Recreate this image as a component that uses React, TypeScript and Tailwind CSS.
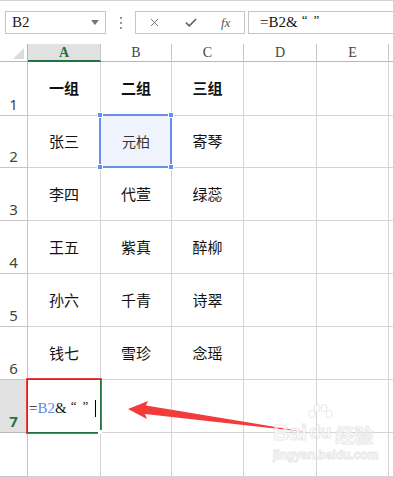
import { X, Check } from 'lucide-react';

const cols = ['A', 'B', 'C', 'D', 'E'];

const data: string[][] = [
  ['一组', '二组', '三组'],
  ['张三', '元柏', '寄琴'],
  ['李四', '代萱', '绿蕊'],
  ['王五', '紫真', '醉柳'],
  ['孙六', '千青', '诗翠'],
  ['钱七', '雪珍', '念瑶'],
];

const cjk = { fontFamily: '"Noto Sans CJK SC", sans-serif' };
const serif = { fontFamily: '"Liberation Serif", "Noto Sans CJK SC", serif' };

function Quotes() {
  return (
    <span className="relative top-[-3px] text-[13px] ml-[4px] tracking-[6px]" style={serif}>“”</span>
  );
}

function Toolbar() {
  return (
    <div className="h-[44px] border-t border-[#d4d4d4] flex items-start pt-[10px] pl-[5px]">
      <div className="w-[101px] h-[23px] border border-[#c6c6c6] flex items-center justify-between pl-[6px] pr-[6px]">
        <span className="text-[15px] text-[#222] leading-none" style={serif}>B2</span>
        <svg width="8" height="5" viewBox="0 0 8 5"><path d="M0 0h8L4 5z" fill="#777" /></svg>
      </div>
      <div className="ml-[14px] mt-[6px] flex flex-col gap-[3px]">
        <span className="w-[2px] h-[2px] bg-[#999]" />
        <span className="w-[2px] h-[2px] bg-[#999]" />
        <span className="w-[2px] h-[2px] bg-[#999]" />
      </div>
      <div className="ml-[13px] w-[110px] h-[23px] border border-[#c6c6c6] flex items-center">
        <X className="w-[13px] h-[13px] ml-[12px] text-[#666]" strokeWidth={1.6} />
        <Check className="w-[14px] h-[14px] ml-[23px] text-[#666]" strokeWidth={3} />
        <span className="ml-[23px] text-[13px] italic text-[#555] leading-none" style={serif}>fx</span>
      </div>
      <div className="ml-[3px] flex-1 h-[23px] border border-r-0 border-[#c6c6c6] flex items-center pl-[11px]">
        <span className="text-[15px] text-[#111] leading-none" style={serif}>=B2&amp;<Quotes /></span>
      </div>
    </div>
  );
}

function Grid() {
  const rowHeights = ['h-[54px]', 'h-[52px]', 'h-[53px]', 'h-[53px]', 'h-[53px]', 'h-[53px]', 'h-[53px]', 'h-[44px]'];
  return (
    <div className="grid grid-cols-[28px_73px_71px_72px_73px_72px_4px]">
      <div className="h-[18px] border-r border-b border-[#b8b8b8] flex items-end justify-end pr-[3px] pb-[2px]">
        <svg width="11" height="11" viewBox="0 0 11 11"><path d="M11 0v11H0z" fill="#dcdcdc" /></svg>
      </div>
      {cols.map((c, i) => (
        <div
          key={c}
          className={
            i === 0
              ? 'h-[18px] bg-[#e1e1e1] border-r border-[#c6c6c6] border-b-2 border-b-[#217346] flex items-center justify-center text-[14px] font-bold text-[#217346]'
              : 'h-[18px] border-r border-b border-[#c6c6c6] border-b-[#b8b8b8] flex items-center justify-center text-[14px] text-[#444]'
          }
          style={serif}
        >
          {c}
        </div>
      ))}
      <div className="h-[18px] border-b border-[#b8b8b8]" />

      {rowHeights.map((h, r) => (
        <Row key={r} r={r} h={h} />
      ))}
    </div>
  );
}

function Row({ r, h }: { r: number; h: string }) {
  const active = r === 6;
  const rowData = data[r];
  return (
    <>
      <div
        className={`${h} border-r border-b ${active ? 'bg-[#e1e1e1] border-r-[#217346] border-b-[#b8b8b8]' : 'border-[#c6c6c6]'} flex items-end justify-center pb-[1px]`}
      >
        {r < 7 && (
          <span
            className={`text-[15px] leading-[20px] ${active ? 'font-bold text-[#217346]' : 'text-[#444]'}`}
            style={{ fontFamily: '"Noto Sans", sans-serif' }}
          >
            {r + 1}
          </span>
        )}
      </div>
      {cols.map((c, ci) => {
        const text = rowData ? rowData[ci] : undefined;
        const selected = r === 1 && ci === 1;
        const editing = r === 6 && ci === 0;
        return (
          <div key={c} className={`${h} relative border-r border-b border-[#d4d4d4] flex items-center justify-center`}>
            {selected && (
              <div className="absolute z-10 -left-[2px] -top-[2px] -right-[1px] -bottom-[1px] border-2 border-[#6490eb] bg-[#eef3fd] flex items-center justify-center">
                <span className="text-[14px] text-[#333] pl-[1px]" style={cjk}>{text}</span>
                <span className="absolute -left-[4px] -top-[4px] w-[6px] h-[6px] bg-[#6490eb] border border-white" />
                <span className="absolute -right-[4px] -top-[4px] w-[6px] h-[6px] bg-[#6490eb] border border-white" />
                <span className="absolute -left-[4px] -bottom-[4px] w-[6px] h-[6px] bg-[#6490eb] border border-white" />
                <span className="absolute -right-[4px] -bottom-[4px] w-[6px] h-[6px] bg-[#6490eb] border border-white" />
              </div>
            )}
            {!selected && text && (
              <span className={`text-[15px] text-[#111] ${r === 0 ? 'font-bold' : ''}`} style={cjk}>{text}</span>
            )}
            {editing && (
              <div className="absolute z-10 -left-[2px] -top-[2px] right-[-2px] bottom-[-2px] border border-[#f23b3b]">
                <div className="w-full h-full border border-[#217346] flex items-center pl-px pt-[5px]">
                  <span className="text-[15px] text-[#111] leading-none" style={serif}>
                    =<span className="text-[#5b8ae6]">B2</span>&amp;<Quotes />
                  </span>
                  <span className="ml-[1px] w-px h-[17px] bg-black" />
                </div>
                <span className="absolute right-[-1px] bottom-[-1px] w-[4px] h-[4px] bg-white" />
              </div>
            )}
          </div>
        );
      })}
      <div className={`${h} border-b border-[#d4d4d4]`} />
    </>
  );
}

function Arrow() {
  return (
    <svg className="absolute z-20 left-0 top-0 pointer-events-none" width="393" height="477" viewBox="0 0 393 477">
      <path d="M128 409 L148 401 L146 405.5 L306 432 L145 414 L147 419 Z" fill="#f23b3b" />
    </svg>
  );
}

function Watermark() {
  const stroke = 'text-white [-webkit-text-stroke:1px_#e0e0e0]';
  return (
    <div className="absolute z-20 left-[273px] top-[420px] pointer-events-none opacity-70">
      <div className="flex items-end">
        <span className={`text-[22px] font-bold leading-none ${stroke}`} style={{ fontFamily: '"Liberation Sans", sans-serif' }}>Bai</span>
        <span className="relative ml-[2px]">
          <svg className="absolute left-[-2px] top-[-16px]" width="26" height="18" viewBox="0 0 26 18">
            <ellipse cx="5" cy="10" rx="3" ry="4" fill="white" stroke="#e0e0e0" />
            <ellipse cx="10" cy="4" rx="3" ry="4" fill="white" stroke="#e0e0e0" />
            <ellipse cx="17" cy="4" rx="3" ry="4" fill="white" stroke="#e0e0e0" />
            <ellipse cx="22" cy="10" rx="3" ry="4" fill="white" stroke="#e0e0e0" />
          </svg>
          <span className={`text-[18px] font-bold leading-none ${stroke}`} style={{ fontFamily: '"Liberation Sans", sans-serif' }}>du</span>
        </span>
        <span className={`ml-[4px] text-[19px] font-bold leading-none ${stroke}`} style={cjk}>经验</span>
      </div>
      <div className={`mt-[5px] text-[12px] font-bold leading-none ${stroke}`} style={{ fontFamily: '"Liberation Sans", sans-serif' }}>
        jingyan.baidu.com
      </div>
    </div>
  );
}

export default function App() {
  return (
    <div className="w-[393px] h-[477px] relative overflow-hidden bg-white">
      <Toolbar />
      <Grid />
      <Arrow />
      <Watermark />
    </div>
  );
}
